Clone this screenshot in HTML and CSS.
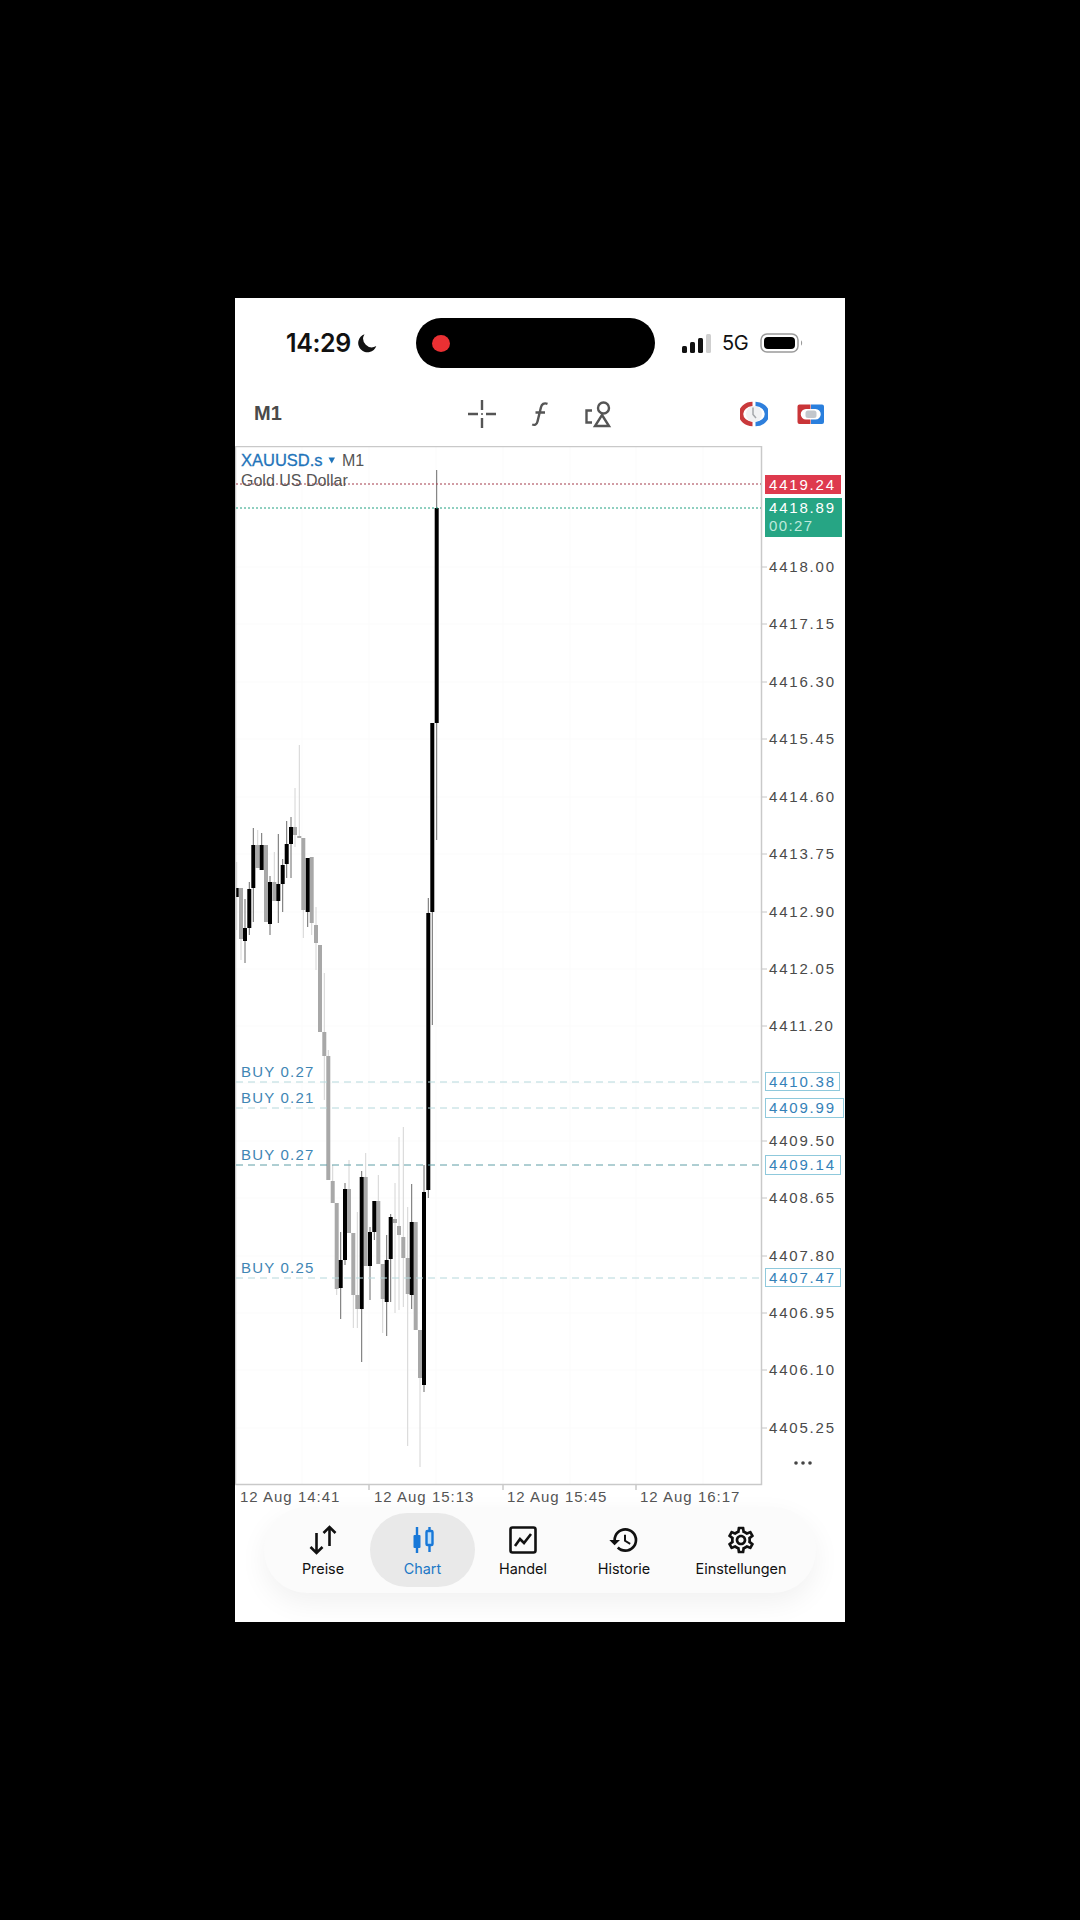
FILE: index.html
```html
<!DOCTYPE html>
<html lang="de">
<head>
<meta charset="utf-8">
<title>XAUUSD.s M1</title>
<link rel="stylesheet" href="styles.css">
</head>
<body>
<main class="phone">
  <header class="status">
    <div class="status-left">
      <span class="time">14:29</span>
      <svg class="moon" viewBox="0 0 20 20"><path d="M7.500 1.200A9.300 9.300 0 1 0 19.300 13 8.600 8.600 0 0 1 7.500 1.200z"/></svg>
    </div>
    <div class="island"><span class="rec"></span></div>
    <div class="status-right">
      <svg class="signal" viewBox="0 0 29 19"><rect x="0" y="12" width="5" height="7" rx="1.500"/><rect x="8" y="8" width="5" height="11" rx="1.500"/><rect x="16" y="4" width="5" height="15" rx="1.500"/><rect class="signal-off" x="24" y="0" width="5" height="19" rx="1.500"/></svg>
      <span class="net">5G</span>
      <svg class="battery" viewBox="0 0 43 20"><rect class="bat-shell" x="1" y="1" width="37" height="18" rx="6"/><rect x="4" y="4" width="31" height="12" rx="4"/><path class="bat-cap" d="M41 7.500c1.500.5 1.500 4.500 0 5z"/></svg>
    </div>
  </header>

  <nav class="toolbar">
    <span class="period">M1</span>
    <div class="tools">
      <svg class="tool" viewBox="0 0 28 28"><path d="M14 0v10M14 18v10M0 14h10M18 14h10"/><circle class="tool-dot" cx="14" cy="14" r="1"/></svg>
      <svg class="tool" viewBox="0 0 28 28"><path d="M21.500 3.800c-3.500-1.300-5.800.2-6.600 3.700l-3.400 14c-.7 3-2.800 4-5.300 3M9.500 12.500h9.500"/></svg>
      <svg class="tool" viewBox="0 0 28 28"><circle cx="19.500" cy="8" r="5.500"/><path d="M18 15l7 11H11zM8 10.500H2.500v12H8"/></svg>
    </div>
    <div class="modes">
      <svg class="mode" viewBox="0 0 28 28"><path class="arc-red" d="M12.500 4a11.500 10 0 0 0 0 20"/><path class="arc-blue" d="M15.500 4a11.500 10 0 0 1 0 20"/><circle class="arc-face" cx="14" cy="14" r="8"/><path class="arc-hand" d="M13 7.500v7l3 3.500"/></svg>
      <svg class="mode" viewBox="0 0 28 28"><path class="box-red" d="M2.500 4.500h11v4.500h-4.500a5 5 0 0 0 0 10.500h4.500v4.500h-11a2 2 0 0 1-2-2v-15.500a2 2 0 0 1 2-2z"/><path class="box-blue" d="M14 4.500h11a2 2 0 0 1 2 2v15.500a2 2 0 0 1-2 2H14v-4.500h4.500a5 5 0 0 0 0-10.500H14z"/><rect class="box-mid" x="8.500" y="10.500" width="11" height="7.500" rx="2.500"/></svg>
    </div>
  </nav>

  <section class="chart">
    <svg class="chart-svg" viewBox="235 446 610 1061" width="610" height="1061">
      <path class="grid" d="M302 447V1484M369 447V1484M436 447V1484M503 447V1484M570 447V1484M636 447V1484M703 447V1484M236 567H761M236 624H761M236 682H761M236 739H761M236 797H761M236 854H761M236 912H761M236 969H761M236 1026H761M236 1083H761M236 1141H761M236 1198H761M236 1256H761M236 1313H761M236 1370H761M236 1428H761"/>

      <path class="wick-light" d="M236.700 862V930M241 888V960M257.700 830V868M266 845V922M274.300 852V901M295 788V847M299.300 745V837M303.300 838V938M311.700 857V935M316 907V970M320 945V1032M324.300 973V1100M328.300 1050V1180M332.700 1165V1203M336.700 1203V1295M349 1160V1233M353.300 1233V1328M357.300 1212V1328M365.700 1153V1266M378.300 1175V1264M382.700 1264V1333M395 1183V1313M399 1137V1310M403.300 1127V1307M407.700 1207V1446M415.700 1222V1330M420 1330V1467"/>
      <path class="wick-dark" d="M245 899V963M249.300 882V935M253.300 828V922M261.700 833V870M270 876V935M278.300 834V923M282.700 859V912M286.700 821V878M291 817V878M307.700 858V927M340.700 1232V1319M345 1183V1265M361.700 1171V1362M370 1227V1300M374.300 1201V1240M386.700 1235V1336M390.700 1214V1302M411.700 1184V1309M424 1165V1392M428.300 898V1198M432.300 723V1025M436.700 470V840"/>
      <path class="body-grey" d="M241 888V939M257.700 845V868M266 845V922M274.300 882V901M295 827V835M299.300 836V838M303.300 838V910M311.700 857V923M316 925V943M320 945V1032M324.300 1032V1056M328.300 1056V1180M332.700 1181V1203M336.700 1203V1289M349 1189V1233M353.300 1233V1295M357.300 1295V1309M365.700 1177V1266M378.300 1201V1264M382.700 1264V1299M395 1219V1223M399 1226V1235M403.300 1237V1258M407.700 1258V1294M415.700 1222V1330M420 1330V1378"/>
      <path class="body-black" d="M236.700 888V897M245 928V941M249.300 889V928M253.300 845V888M261.700 845V870M270 882V924M278.300 884V901M282.700 865V884M286.700 844V864M291 827V844M307.700 858V912M340.700 1260V1288M345 1189V1260M361.700 1177V1309M370 1232V1266M374.300 1201V1232M386.700 1260V1302M390.700 1217V1259M411.700 1222V1295M424 1192V1385M428.300 913V1190M432.300 723V912M436.700 508V723"/>

      <path class="frame" d="M235.500 1484.500V446.500H761.500V1484.500H235M369 1485v5M503 1485v5M636 1485v5"/>
      <path class="ticks" d="M762 567h5M762 624h5M762 682h5M762 739h5M762 797h5M762 854h5M762 912h5M762 969h5M762 1026h5M762 1141h5M762 1198h5M762 1256h5M762 1313h5M762 1370h5M762 1428h5"/>

      <line class="ask-line" x1="236" y1="484" x2="761" y2="484"/>
      <line class="bid-line" x1="236" y1="508" x2="761" y2="508"/>
      <path class="order-line" d="M236 1082H761M236 1108H761M236 1278H761"/>
      <line class="order-line-strong" x1="236" y1="1165" x2="761" y2="1165"/>

      <text class="symbol" x="241" y="466">XAUUSD.s</text>
      <path class="symbol-arrow" d="M328.500 457.500h6.500l-3.250 6z"/>
      <text class="symbol-period" x="342" y="466">M1</text>
      <text class="symbol-name" x="241" y="486">Gold US Dollar</text>

      <text class="buy" x="241" y="1077">BUY 0.27</text>
      <text class="buy" x="241" y="1103">BUY 0.21</text>
      <text class="buy" x="241" y="1160">BUY 0.27</text>
      <text class="buy" x="241" y="1273">BUY 0.25</text>

      <rect class="tag-red" x="765" y="475" width="76" height="19"/>
      <text class="tag-text" x="769" y="490">4419.24</text>
      <rect class="tag-green" x="765" y="498" width="77" height="39"/>
      <text class="tag-text" x="769" y="513">4418.89</text>
      <text class="tag-sub" x="769" y="531">00:27</text>

      <g class="prices">
        <text x="769" y="572">4418.00</text>
        <text x="769" y="629">4417.15</text>
        <text x="769" y="687">4416.30</text>
        <text x="769" y="744">4415.45</text>
        <text x="769" y="802">4414.60</text>
        <text x="769" y="859">4413.75</text>
        <text x="769" y="917">4412.90</text>
        <text x="769" y="974">4412.05</text>
        <text x="769" y="1031">4411.20</text>
        <text x="769" y="1146">4409.50</text>
        <text x="769" y="1203">4408.65</text>
        <text x="769" y="1261">4407.80</text>
        <text x="769" y="1318">4406.95</text>
        <text x="769" y="1375">4406.10</text>
        <text x="769" y="1433">4405.25</text>
      </g>

      <rect class="tag-order" x="765.500" y="1072.500" width="74" height="18"/>
      <text class="tag-order-text" x="769" y="1087">4410.38</text>
      <rect class="tag-order" x="765.500" y="1098.500" width="78" height="19"/>
      <text class="tag-order-text" x="769" y="1113">4409.99</text>
      <rect class="tag-order" x="765.500" y="1155.500" width="75" height="19"/>
      <text class="tag-order-text" x="769" y="1170">4409.14</text>
      <rect class="tag-order" x="765.500" y="1268.500" width="75" height="18"/>
      <text class="tag-order-text" x="769" y="1283">4407.47</text>

      <g class="more"><circle cx="796" cy="1463" r="1.800"/><circle cx="803" cy="1463" r="1.800"/><circle cx="810" cy="1463" r="1.800"/></g>

      <g class="dates">
        <text x="240" y="1502">12 Aug 14:41</text>
        <text x="374" y="1502">12 Aug 15:13</text>
        <text x="507" y="1502">12 Aug 15:45</text>
        <text x="640" y="1502">12 Aug 16:17</text>
      </g>
    </svg>
  </section>

  <nav class="tabbar">
    <a class="tab tab-prices">
      <svg class="tab-icon" viewBox="0 0 32 32"><path d="M9.500 9v20M3.500 23l6 6 6-6M22.500 22V3M16.500 9l6-6 6 6"/></svg>
      <span>Preise</span>
    </a>
    <a class="tab tab-active">
      <svg class="tab-icon icon-chart" viewBox="0 0 32 32"><path class="candle-line" d="M10 3v26M22.500 3v25"/><rect class="candle-fill" x="6.500" y="11" width="7" height="13" rx="1"/><rect class="candle-open" x="19.500" y="7" width="6" height="14" rx="1"/></svg>
      <span>Chart</span>
    </a>
    <a class="tab">
      <svg class="tab-icon" viewBox="0 0 32 32"><rect x="3.500" y="3.500" width="25" height="25" rx="2"/><path d="M8 22l5-7 4 4 7-9"/></svg>
      <span>Handel</span>
    </a>
    <a class="tab">
      <svg class="tab-icon icon-solid" viewBox="0 0 24 24"><path d="M13 3a9 9 0 0 0-9 9H1l3.890 3.890.07.14L9 12H6c0-3.870 3.130-7 7-7s7 3.130 7 7-3.130 7-7 7c-1.930 0-3.680-.79-4.940-2.060l-1.420 1.420A8.954 8.954 0 0 0 13 21a9 9 0 0 0 0-18zm-1 5v5l4.280 2.540.72-1.210-3.500-2.080V8H12z"/></svg>
      <span>Historie</span>
    </a>
    <a class="tab">
      <svg class="tab-icon icon-solid" viewBox="0 0 24 24"><path d="M19.430 12.980c.04-.32.07-.64.07-.98 0-.34-.03-.66-.07-.98l2.110-1.650c.19-.15.24-.42.12-.64l-2-3.460c-.09-.16-.26-.25-.44-.25-.06 0-.12.01-.17.03l-2.490 1c-.52-.4-1.080-.73-1.690-.98l-.38-2.650C14.460 2.180 14.250 2 14 2h-4c-.25 0-.46.18-.49.42l-.38 2.650c-.61.25-1.170.59-1.690.98l-2.490-1c-.06-.02-.12-.03-.18-.03-.17 0-.34.09-.43.25l-2 3.460c-.13.22-.07.49.12.64l2.110 1.650c-.04.32-.07.65-.07.98 0 .33.03.66.07.98l-2.110 1.650c-.19.15-.24.42-.12.64l2 3.460c.09.16.26.25.44.25.06 0 .12-.01.17-.03l2.490-1c.52.4 1.080.73 1.690.98l.38 2.650c.03.24.24.42.49.42h4c.25 0 .46-.18.49-.42l.38-2.650c.61-.25 1.170-.59 1.690-.98l2.490 1c.06.02.12.03.18.03.17 0 .34-.09.43-.25l2-3.460c.12-.22.07-.49-.12-.64l-2.110-1.650zm-1.980-1.710c.04.31.05.52.05.73 0 .21-.02.43-.05.73l-.14 1.130.89.7 1.080.84-.7 1.210-1.270-.51-1.040-.42-.9.68c-.43.32-.84.56-1.250.73l-1.060.43-.16 1.130-.2 1.350h-1.400l-.19-1.350-.16-1.130-1.060-.43c-.43-.18-.83-.41-1.230-.71l-.91-.7-1.060.43-1.270.51-.7-1.210 1.080-.84.89-.7-.14-1.130c-.03-.31-.05-.54-.05-.74s.02-.43.05-.73l.14-1.130-.89-.7-1.080-.84.7-1.210 1.270.51 1.040.42.9-.68c.43-.32.84-.56 1.250-.73l1.060-.43.16-1.130.2-1.350h1.390l.19 1.350.16 1.130 1.060.43c.43.18.83.41 1.230.71l.91.7 1.060-.43 1.270-.51.7 1.210-1.070.85-.89.7.14 1.130zM12 8c-2.210 0-4 1.790-4 4s1.790 4 4 4 4-1.790 4-4-1.790-4-4-4zm0 6c-1.100 0-2-.9-2-2s.9-2 2-2 2 .9 2 2-.9 2-2 2z"/></svg>
      <span>Einstellungen</span>
    </a>
  </nav>
</main>
</body>
</html>
```

FILE: styles.css
```css
* { box-sizing: border-box; }
html, body { margin: 0; background: #000; }
body {
  width: 1080px;
  height: 1920px;
  padding: 298px 235px 0;
  overflow: hidden;
  font-family: Inter, "Liberation Sans", sans-serif;
}
.phone {
  width: 610px;
  height: 1324px;
  background: #fff;
  display: flex;
  flex-direction: column;
}

/* status bar */
.status {
  height: 92px;
  display: flex;
  align-items: flex-start;
  padding-top: 20px;
}
.status-left {
  width: 181px;
  height: 50px;
  padding-left: 51px;
  display: flex;
  align-items: center;
  gap: 6px;
}
.time { font-size: 25px; font-weight: 600; color: #111; letter-spacing: -.4px; }
.moon { width: 20px; height: 20px; fill: #111; }
.island {
  width: 239px;
  height: 50px;
  background: #000;
  border-radius: 25px;
  display: flex;
  align-items: center;
  padding-left: 16px;
}
.rec { width: 18px; height: 17px; border-radius: 50%; background: #ea3033; }
.status-right {
  height: 50px;
  padding-left: 27px;
  display: flex;
  align-items: center;
  gap: 11px;
}
.signal { width: 29px; height: 19px; fill: #111; }
.signal-off { fill: #cfcfcf; }
.net { font-size: 20px; font-weight: 400; color: #111; width: 27px; letter-spacing: -.3px; }
.battery { width: 43px; height: 20px; fill: #000; }
.bat-shell { fill: none; stroke: #9a9a9a; stroke-width: 1.500; }
.bat-cap { fill: #999; }

/* toolbar */
.toolbar {
  height: 56px;
  display: flex;
  align-items: flex-start;
  padding: 10px 0 0 19px;
}
.period { width: 214px; padding-top: 2px; font: 700 20px "Liberation Sans", sans-serif; color: #4a4a4a; }
.tools { display: flex; gap: 30px; width: 272px; }
.tool { width: 28px; height: 28px; fill: none; stroke: #555; stroke-width: 2.400; }
.tool-dot { fill: #555; stroke: none; }
.modes { display: flex; gap: 29px; }
.mode { width: 28px; height: 28px; }
.arc-red { fill: none; stroke: #c9393b; stroke-width: 4.500; }
.arc-blue { fill: none; stroke: #2e7fdc; stroke-width: 4.500; }
.arc-face { fill: #f1f1f3; }
.arc-hand { fill: none; stroke: #a4a6aa; stroke-width: 1.500; }
.box-red { fill: #c93538; }
.box-blue { fill: #2a7fdd; }
.box-mid { fill: #c3c7cc; }

/* chart */
.chart { height: 1061px; flex: none; }
.chart-svg { display: block; font-family: "Liberation Sans", sans-serif; }
.grid { fill: none; stroke: #fbfbfb; stroke-width: 1; }
.frame { fill: none; stroke: #c9c9c9; stroke-width: 1.500; }
.ticks { fill: none; stroke: #c4c4c4; stroke-width: 1; }
.wick-light { fill: none; stroke: #d4d4d4; stroke-width: 1; }
.wick-dark { fill: none; stroke: #6a6a6a; stroke-width: 1; }
.body-grey { fill: none; stroke: #a8a8a8; stroke-width: 4; }
.body-black { fill: none; stroke: #000; stroke-width: 4; }
.ask-line { stroke: #a33a4a; stroke-width: 1; stroke-dasharray: 2 2; }
.bid-line { stroke: #20a080; stroke-width: 1; stroke-dasharray: 2 2; }
.order-line { stroke: #b5d8dc; stroke-width: 1; stroke-dasharray: 7 5; }
.order-line-strong { stroke: #5f9ea6; stroke-width: 1; stroke-dasharray: 7 5; }
.symbol { font-size: 16.500px; fill: #1f74ba; stroke: #1f74ba; stroke-width: .3px; }
.symbol-arrow { fill: #1f74ba; }
.symbol-period { font-size: 16px; fill: #555; }
.symbol-name { font-size: 16px; fill: #555; }
.buy { font-size: 15px; letter-spacing: 1.200px; fill: #3f86b4; }
.tag-red { fill: #de3a4d; }
.tag-green { fill: #26a584; }
.tag-text { font-size: 15px; letter-spacing: 1.800px; fill: #fff; }
.tag-sub { font-size: 15px; letter-spacing: 1.400px; fill: #bfe9dc; }
.prices text { font-size: 15px; letter-spacing: 1.800px; fill: #4a4a4a; }
.tag-order { fill: #fff; stroke: #8fc9dc; stroke-width: 1; }
.tag-order-text { font-size: 15px; letter-spacing: 1.800px; fill: #3481b8; }
.more { fill: #444; }
.dates text { font-size: 15px; letter-spacing: 1px; fill: #555; }

/* tab bar */
.tabbar {
  width: 552px;
  height: 86px;
  flex: none;
  margin-left: 29px;
  background: #fbfbfb;
  border-radius: 43px;
  box-shadow: 0 10px 28px rgba(0, 0, 0, .06);
  display: grid;
  grid-template-columns: 106px 105px 96px 106px 128px;
  align-items: center;
}
.tab {
  height: 74px;
  display: flex;
  flex-direction: column;
  align-items: center;
  padding-top: 11px;
  gap: 4px;
  font-size: 14.400px;
  font-weight: 400;
  color: #111;
}
.tab-prices { padding-left: 12px; }
.tab-active {
  background: #e9e9e9;
  border-radius: 37px;
  color: #1b78c6;
}
.tab-icon { width: 32px; height: 32px; fill: none; stroke: #111; stroke-width: 2.600; }
.icon-solid { fill: #111; stroke: none; }
.icon-chart { stroke: none; }
.candle-line { fill: none; stroke: #1878d8; stroke-width: 2.400; }
.candle-fill { fill: #1878d8; }
.candle-open { fill: #bfe0fb; stroke: #1878d8; stroke-width: 2.400; }
```
